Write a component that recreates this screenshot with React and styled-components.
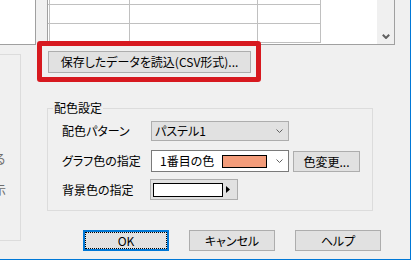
import React from 'react';
import styled, { createGlobalStyle } from 'styled-components';

const GlobalStyle = createGlobalStyle`
  * { box-sizing: border-box; }
  body {
    margin: 0;
    background: #f0f0f0;
    font-family: "Noto Sans CJK JP", "Noto Sans", sans-serif;
    font-size: 12px;
    color: #000;
  }
`;

function Chevron({ bold }) {
  return (
    <svg width={bold ? 8 : 7} height={bold ? 5 : 4} viewBox={bold ? '0 0 8 5' : '0 0 7 4'}>
      {bold
        ? <polyline points="0.8,0.8 4,4 7.2,0.8" fill="none" stroke="#606060" strokeWidth="2" />
        : <polyline points="0.5,0.5 3.5,3.5 6.5,0.5" fill="none" stroke="#606060" strokeWidth="1" />}
    </svg>
  );
}

function App() {
  const cols = [0, 1, 2, 3];
  const rows = [0, 1, 2];
  return (
    <Window>
      <GlobalStyle />
      <TopRow>
        <LeftList />
        <TableFrame>
          <Grid>
            {rows.map(r => cols.map(c => <Cell key={`${r}-${c}`} />))}
          </Grid>
          <Filler />
          <ScrollTrack>
            <Chevron bold />
          </ScrollTrack>
        </TableFrame>
      </TopRow>

      <Body>
        <LeftPane>
          <LeftGroup>
            <ClippedText $top={96}>る</ClippedText>
            <ClippedText $top={15}>示</ClippedText>
          </LeftGroup>
        </LeftPane>

        <RightPane>
          <LoadWrap>
            <Button $w={203} $h={22}>保存したデータを読込(CSV形式)...</Button>
            <RedFrame />
          </LoadWrap>

          <Group>
            <GroupTitle>配色設定</GroupTitle>
            <Row $mt={5}>
              <Label>配色パターン</Label>
              <Select>
                <span>パステル1</span>
                <Chevron />
              </Select>
            </Row>
            <Row $mt={9}>
              <Label>グラフ色の指定</Label>
              <Combo>
                <ComboText>1番目の色</ComboText>
                <Swatch />
                <ChevronSlot><Chevron /></ChevronSlot>
              </Combo>
              <ChangeButton $w={67} $h={21}>色変更...</ChangeButton>
            </Row>
            <Row $mt={7}>
              <Label>背景色の指定</Label>
              <ColorButton>
                <WhiteBox />
                <svg width="4" height="7" viewBox="0 0 4 7" style={{ marginLeft: 3 }}>
                  <polygon points="0,0 4,3.5 0,7" fill="#000" />
                </svg>
              </ColorButton>
            </Row>
          </Group>

          <ButtonRow>
            <OkButton $w={86} $h={21}>OK</OkButton>
            <Button $w={86} $h={21}>キャンセル</Button>
            <Button $w={86} $h={21}>ヘルプ</Button>
          </ButtonRow>
        </RightPane>
      </Body>
    </Window>
  );
}
export default App;

const Window = styled.div`
  width: 411px;
  height: 260px;
  border-right: 1px solid #0078d7;
  border-bottom: 1px solid #0078d7;
  background: #f0f0f0;
  overflow: hidden;
  display: flex;
  flex-direction: column;
`;

const TopRow = styled.div`
  display: flex;
  height: 45px;
  flex-shrink: 0;
`;

const LeftList = styled.div`
  width: 36px;
  height: 45px;
  background: #fff;
  border-right: 1px solid #a0a0a0;
  border-bottom: 1px solid #a0a0a0;
`;

const TableFrame = styled.div`
  display: flex;
  margin-left: 11px;
  width: 348px;
  height: 45px;
  background: #fff;
  border: 1px solid #a0a0a0;
  border-top: none;
`;

const Grid = styled.div`
  display: grid;
  grid-template-columns: 2px 80px 128px 63px;
  grid-template-rows: 5px 19px 19px;
  align-content: start;
`;

const Cell = styled.div`
  border-right: 1px solid #c0c0c0;
  border-bottom: 1px solid #c0c0c0;
`;

const Filler = styled.div`
  flex: 1;
`;

const ScrollTrack = styled.div`
  width: 17px;
  background: #f0f0f0;
  display: flex;
  align-items: flex-end;
  justify-content: center;
  padding-bottom: 5px;
`;

const Body = styled.div`
  display: flex;
  flex: 1;
`;

const LeftPane = styled.div`
  width: 21px;
  flex-shrink: 0;
`;

const LeftGroup = styled.div`
  margin-top: 9px;
  height: 187px;
  border-top: 1px solid #dcdcdc;
  border-right: 1px solid #dcdcdc;
  border-bottom: 1px solid #dcdcdc;
  overflow: hidden;
  display: flex;
  flex-direction: column;
`;

const ClippedText = styled.div`
  margin-top: ${p => p.$top}px;
  margin-left: -6px;
  line-height: 16px;
  color: #6d6d6d;
  white-space: nowrap;
`;

const RightPane = styled.div`
  flex: 1;
  display: flex;
  flex-direction: column;
  align-items: flex-start;
`;

const LoadWrap = styled.div`
  position: relative;
  margin: 6px 0 0 27px;
`;

const Button = styled.button`
  width: ${p => p.$w}px;
  height: ${p => p.$h}px;
  padding: 0;
  background: #e1e1e1;
  border: 1px solid #adadad;
  font-family: inherit;
  font-size: 12px;
  line-height: 1;
  color: #000;
  white-space: nowrap;
  font-feature-settings: "palt";
  display: flex;
  align-items: center;
  justify-content: center;
`;

const RedFrame = styled.div`
  position: absolute;
  top: -10px;
  left: -11px;
  right: -10px;
  bottom: -9px;
  border: 5px solid #d7191f;
  border-radius: 3px;
  pointer-events: none;
  z-index: 1;
`;

const Group = styled.div`
  margin: 35px 0 0 26px;
  width: 326px;
  border: 1px solid #dcdcdc;
  padding-bottom: 10px;
  display: flex;
  flex-direction: column;
`;

const GroupTitle = styled.div`
  align-self: flex-start;
  margin: -9px 0 0 5px;
  padding: 0 1px;
  background: #f0f0f0;
  line-height: 16px;
`;

const Row = styled.div`
  display: flex;
  align-items: center;
  padding-left: 14px;
  margin-top: ${p => p.$mt}px;
`;

const Label = styled.div`
  width: 89px;
  line-height: 16px;
  white-space: nowrap;
  font-feature-settings: "palt";
`;

const Select = styled.div`
  width: 138px;
  height: 20px;
  background: #e1e1e1;
  border: 1px solid #adadad;
  display: flex;
  align-items: center;
  justify-content: space-between;
  padding: 0 5px 0 3px;
  line-height: 16px;
  font-feature-settings: "palt";
`;

const Combo = styled.div`
  width: 138px;
  height: 22px;
  background: #fff;
  border: 1px solid #7a7a7a;
  display: flex;
  align-items: center;
  padding: 0 5px 0 8px;
  line-height: 16px;
`;

const ComboText = styled.span`
  flex: 1;
  white-space: nowrap;
  font-feature-settings: "palt";
`;

const Swatch = styled.div`
  width: 45px;
  height: 13px;
  background: #f39c7a;
  border: 1px solid #000;
`;

const ChevronSlot = styled.div`
  margin-left: 9px;
  display: flex;
`;

const ChangeButton = styled(Button)`
  margin-left: 4px;
  align-self: flex-end;
`;

const ColorButton = styled.div`
  width: 88px;
  height: 21px;
  margin-left: -1px;
  background: #e1e1e1;
  border: 1px solid #adadad;
  display: flex;
  align-items: center;
  padding-left: 2px;
`;

const WhiteBox = styled.div`
  width: 70px;
  height: 14px;
  background: #fff;
  border: 1px solid #000;
`;

const ButtonRow = styled.div`
  display: flex;
  gap: 20px;
  margin: 19px 0 0 62px;
`;

const OkButton = styled(Button)`
  border: 2px solid #0078d7;
  outline: 1px dotted #000;
  outline-offset: -3px;
`;
